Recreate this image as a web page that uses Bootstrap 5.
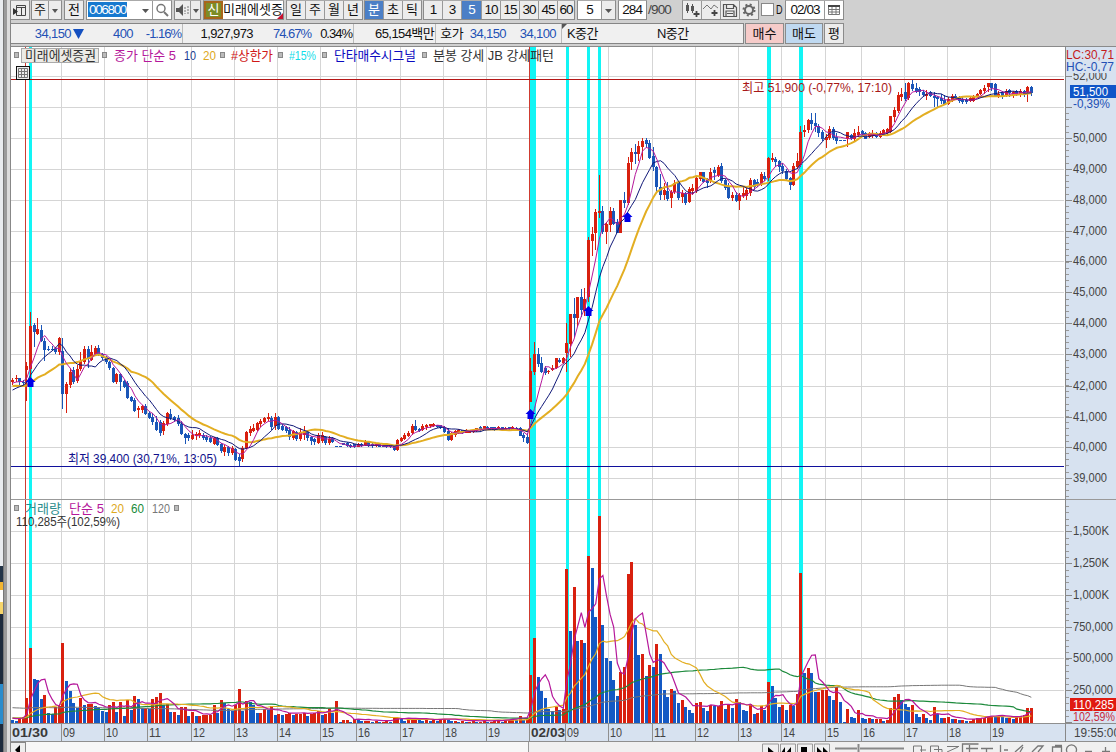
<!DOCTYPE html>
<html lang="ko">
<head>
<meta charset="utf-8">
<title>미래에셋증권 5분봉</title>
<link rel="stylesheet" href="https://cdn.jsdelivr.net/npm/bootstrap@5.3.0/dist/css/bootstrap.min.css">
<style>
body{width:1116px;height:752px;overflow:hidden;background:#d0d0d0;color:#111;font:13px/18px "Liberation Sans","Noto Sans CJK KR",sans-serif}
.edge{width:11px;flex:none;background:linear-gradient(90deg,#e9ecef 0 3px,#777 3px 4px,#9b9b9b 4px 7px,#dcdcdc 7px 10px,#888 10px)}
.edge i{display:block;width:3px}
main{width:1105px}
.bar1{height:22px;padding-bottom:2px;margin-left:-1px;gap:2px}
.grp{height:20px;flex:none;background:#ececec;border:1px solid #8b8b8b;border-top-color:#aaa}
.grp.tight{margin-left:-1px}
.cel{flex:none;width:19px;text-align:center;border-left:1px solid #999;font-size:13px;line-height:18px;height:18px;white-space:nowrap;overflow:hidden}
.cel.num{letter-spacing:-.95px;font-size:13.5px}
.cel:first-child{border-left:0;width:18px}
.cel.fill{background:#4b7fc6;color:#fff}
.cel.w13{width:13px}.cel.w14{width:14px}.cel.w10{width:10px}.cel.w17{width:17px}.cel.w20{width:20px}.cel.w38{width:38px}
.cel.w15:first-child{width:15px}.cel.w16:first-child{width:16px}.cel.w23:first-child{width:23px}.cel.w27:first-child{width:27px}.cel.w38:first-child{width:38px}
.cel.code:first-child{width:51px;text-align:left}
.code span{background:#1779cf;color:#fff;letter-spacing:-1.35px;font-size:13.5px;padding:0 1px;margin-left:1px;display:inline-block;height:15px;line-height:15px}
.cel.sin:first-child{background:#7c8c26;color:#fff;outline:2px solid #a7661c;outline-offset:-2px;width:19px}
.cel.nm{width:60px;border-left:0}
.total{width:32px;font-size:13.5px;letter-spacing:-.8px;line-height:20px;color:#444;margin-left:-1px;flex:none}
.chk{width:13px;height:13px;border:1px solid #888;margin-top:3px;flex:none}
.dchar{width:7px;line-height:19px;flex:none;transform:scaleX(.7);transform-origin:0 0}
.wht{background:#fff}
.bar2{height:24px;padding-top:1px;margin-left:-1px;gap:1px}
.quote{width:734px;height:21px;background:#f0f0f0;border:1px solid #858585;font-size:13px;line-height:19px;letter-spacing:-.6px;flex:none}
.quote span{flex:none;text-align:right;white-space:pre}
.quote .dv{border-right:1px solid #bbb;padding-right:1px}
.quote .pct{letter-spacing:-1px}
.bl{color:#2350b5}
.act{height:21px;border:1px solid #8b8b8b;text-align:center;line-height:19px;flex:none}
svg{display:block}
.plot text{font-size:13px;white-space:pre}
.foot{height:10px;background:#f0f0f0;overflow:hidden}
.foot .track{width:503px;background:#f7f7f7;flex:none;border-right:1px solid #999}
.foot .knob{width:15px;border:1px solid #888;border-width:1px 1px 0 0;background:#eee;flex:none}
</style>
</head>
<body>
<div class="d-flex h-100">
  <div class="edge">
    <i style="height:566px"></i>
    <i style="height:16px;background:#233447"></i>
    <i style="height:8px;background:#f2b530"></i>
    <i style="height:12px;background:#fff"></i>
    <i style="height:12px;background:#f6d56a"></i>
    <i style="height:70px;background:#1d2b3d"></i>
    <i style="height:40px;background:#2a8ccc"></i>
    <i style="height:28px;background:#1d2b3d"></i>
  </div>
  <main class="d-flex flex-column">
    <div class="bar1 d-flex">
      <div class="grp d-flex"><div class="cel"><svg width="18" height="18"><path d="M5.500 4.500h9v10h-9zM5.500 6.500h9M10.500 6.500v8" fill="none" stroke="#444"/><path d="M2 7l5 3.500-5 3.500z" fill="#333"/></svg></div></div>
      <div class="grp tight d-flex"><div class="cel w16">주</div><div class="cel w13"><svg width="12" height="18"><path d="M3 8h6l-3 4z" fill="#555"/></svg></div></div>
      <div class="grp d-flex"><div class="cel">전</div></div>
      <div class="grp d-flex wht"><div class="cel code"><span>006800</span></div><div class="cel w14 border-0"><svg width="13" height="18"><path d="M4 8h7l-3.500 4z" fill="#555"/></svg></div><div class="cel"><svg width="18" height="18"><circle cx="8" cy="7.500" r="4" fill="none" stroke="#777" stroke-width="1.500"/><path d="M11 11l4 4" stroke="#777" stroke-width="2"/></svg></div></div>
      <div class="grp d-flex"><div class="cel w15"><svg width="15" height="18"><path d="M1 7h3l4-4v12l-4-4h-3z" fill="#555"/><path d="M10 6v7M13 5v9" stroke="#777" stroke-dasharray="2 1"/></svg></div><div class="cel w10"><svg width="10" height="18"><path d="M2 8h6l-3 4z" fill="#555"/></svg></div></div>
      <div class="grp d-flex wht position-relative"><div class="cel sin">신</div><div class="cel nm">미래에셋증</div><svg class="position-absolute end-0 bottom-0" width="6" height="6"><path d="M6 0v6H0z" fill="#c8102e"/></svg></div>
      <div class="grp d-flex"><div class="cel">일</div><div class="cel">주</div><div class="cel">월</div><div class="cel">년</div></div>
      <div class="grp tight d-flex"><div class="cel fill">분</div><div class="cel">초</div><div class="cel">틱</div></div>
      <div class="grp tight d-flex"><div class="cel num">1</div><div class="cel num">3</div><div class="cel num fill w20">5</div><div class="cel num">10</div><div class="cel num">15</div><div class="cel num">30</div><div class="cel num">45</div><div class="cel num w17">60</div></div>
      <div class="grp d-flex wht"><div class="cel num w23">5</div><div class="cel w14" style="background:#ececec"><svg width="13" height="18"><path d="M3 8h7l-3.500 4z" fill="#555"/></svg></div></div>
      <div class="grp d-flex wht"><div class="cel num w27 text-end pe-1">284</div></div>
      <div class="total">/900</div>
      <div class="grp d-flex">
        <div class="cel"><svg width="18" height="18"><path d="M4.500 2v10M9.500 3v9" stroke="#555"/><path d="M3 4h3v6h-3zM8 5h3v5h-3z" fill="#555"/><path d="M13.500 10v6M10.500 13h6" stroke="#444" stroke-width="1.800"/></svg></div>
        <div class="cel"><svg width="18" height="18"><path d="M1 8l4-4 4 4 3-4 4 3" fill="none" stroke="#777"/><path d="M12.500 9v6M9.500 12h6" stroke="#444" stroke-width="1.800"/></svg></div>
        <div class="cel"><svg width="18" height="18"><path d="M2.500 3.500h10l3 3v9h-13zM5.500 3.500v4h7v-4M5 15v-5h8v5M6 12.500h6" fill="none" stroke="#555" stroke-width="1.200"/></svg></div>
        <div class="cel"><svg width="18" height="18"><circle cx="9" cy="9" r="4" fill="none" stroke="#666" stroke-width="2"/><circle cx="9" cy="9" r="5.500" fill="none" stroke="#666" stroke-width="2" stroke-dasharray="2 2.320"/></svg></div>
      </div>
      <div class="wht chk"></div>
      <div class="dchar">D</div>
      <div class="grp d-flex wht"><div class="cel num w38">02/03</div><div class="cel"><svg width="17" height="18"><path d="M3.500 4.500h11v9h-11zM3.500 8.500h11M3.500 11h11M7 5v8M11 5v8" fill="none" stroke="#777"/><path d="M3 4h12v2H3z" fill="#444"/></svg></div></div>
    </div>
    <div class="bar2 d-flex">
      <div class="quote d-flex">
        <span class="bl d-flex justify-content-end align-items-center" style="width:73px">34,150<svg width="13" height="12"><path d="M2 1h11L7.500 11z" fill="#1450c0"/></svg></span>
        <span class="bl" style="width:49px">400</span><span class="bl dv pct" style="width:50px">-1.16%</span>
        <span style="width:70px">1,927,973</span><span class="bl pct" style="width:58px">74.67%</span><span class="dv pct" style="width:43px">0.34%</span>
        <span class="dv" style="width:82px">65,154백만</span>
        <span style="width:27px">호가</span><span class="bl" style="width:43px">34,150</span><span class="bl" style="width:50px">34,100</span><span class="dv" style="width:6px"></span>
        <span class="text-start position-relative" style="width:95px;padding-left:5px">K중간<svg class="position-absolute start-0 top-0" width="5" height="5"><path d="M0 0h5L0 5z" fill="#555"/></svg></span><span class="text-start">N중간</span>
      </div>
      <div class="act" style="width:39px;background:#f6cbc9">매수</div>
      <div class="act" style="width:38px;background:#bfd9f1">매도</div>
      <div class="act" style="width:20px;background:#ececec">평</div>
    </div>
    <svg class="plot" id="chart" width="1105" height="696" viewBox="11 46 1105 696"></svg>
    <div class="foot d-flex">
      <div class="knob"><svg width="14" height="10"><path d="M9 2v10L4 7z" fill="#000"/></svg></div>
      <div class="track"></div>
      <div class="flex-fill"><svg width="587" height="10" viewBox="529 742 587 10" fill="none" stroke="#777">
        <path d="M762.500 752v-8h16v8M780.500 752v-8h15v8M797.500 752v-8h15v8M814.500 752v-8h15v8" stroke="#999"/>
        <path d="M768 747l7 6h-7zM791 747v6h-5zM785 747v6h-4zM801 747h6v6h-6zM817 747l5 5h-5zM823 747l5 5h-5z" fill="#000" stroke="none"/>
        <path d="M835 748.500h22M860 748.500h44M858.500 744v8" stroke="#888" stroke-width="2"/>
        <path d="M913.500 752v-6h8v6M920 750h6M930.500 752v-6h8v6M934 749.500h8v4M947 746.500h12M947 752l11-5" />
        <path d="M962.500 752v-8h16M969.500 745v8M966 748.500h12M981 748.500h12M986.500 748v5M1000.500 745v8M1004 750h4M1015 752l8-7M1020 752l3-5M1032 752l6-6h5l-5 6M1052.500 752v-5h9v5M1055 745.500h7M1067 752a5 5 0 1 1 9 0M1085 751.500h7M1102 751.500h8M1105.500 747v5" stroke-width="1.300"/>
      </svg></div>
    </div>
  </main>
</div>
<script src="https://cdn.jsdelivr.net/npm/bootstrap@5.3.0/dist/js/bootstrap.bundle.min.js"></script>
<script>
const UP='#d8200f', DN='#1a56b8', STEP=3.6, X0=12.5;
// one candle per entry: direction, body top, body bottom, high, low
const candles=`r380,382,378,385 r378,379,375,382 b378,382,378,385 b382,383,380,385 r366,370,362,401 r326,369,312,381 b325,332,323,347 r329,334,318,335 b330,341,325,342 b341,350,338,361
b349,350,346,351 b349,350,346,351 b349,352,347,354 r338,352,337,355 b351,394,338,409 r384,394,382,413 r372,385,368,388 b370,382,367,384 r369,381,365,383 r361,369,352,371
r349,362,346,364 b349,359,346,368 r352,360,345,361 r348,354,346,355 b348,354,345,356 b354,358,353,360 b357,362,356,364 b362,368,361,370 b368,382,367,383 r374,382,373,384
b374,382,373,391 b381,387,380,388 b383,398,381,399 b397,401,396,402 b400,411,398,412 r408,410,406,418 r406,410,405,413 b406,414,404,415 b413,418,411,419 b417,422,413,425
b422,430,416,431 b422,433,420,436 r423,431,421,435 r413,424,412,426 b414,418,409,420 b417,420,416,422 b418,424,415,426 b424,434,421,435 b434,438,433,444 b435,438,433,441
r435,439,430,440 r434,436,432,440 r433,435,430,438 b435,438,433,440 b437,440,435,442 b438,442,436,443 r438,444,437,445 b438,445,437,446 b444,451,443,453 r447,452,445,456
b447,453,446,456 r448,453,446,455 b449,460,448,461 b457,461,454,466 r448,459,446,462 r432,448,431,449 r429,433,426,436 r428,431,424,432 r423,430,422,431 r421,424,419,427
r418,422,417,423 r417,419,413,421 b418,427,416,430 r417,426,413,430 b417,429,416,430 b426,430,424,431 b427,431,426,433 b430,437,427,440 r431,438,430,440 b432,439,431,441
r432,439,428,441 r431,435,426,440 b432,438,431,441 b437,441,436,445 b439,442,438,445 r435,443,433,444 r435,441,432,443 b437,443,436,445 r439,443,436,445 b438,442,437,443
b446,447,446,447 b446,447,446,447 b443,445,443,445 b443,446,442,447 b445,447,444,448 b444,447,444,448 r444,447,443,447 b444,446,443,447 r442,445,440,446 b442,446,441,447
b444,446,443,448 r444,446,443,447 b444,447,444,447 b445,447,444,447 b445,447,445,448 b445,447,445,448 b446,450,445,451 r440,450,439,451 r438,441,437,442 r435,439,433,440
r433,436,431,437 r426,433,424,435 b426,430,420,431 b429,431,428,432 r426,430,424,431 r425,427,424,430 r424,426,424,428 r424,426,423,427 b425,427,425,428 b425,428,425,429
b427,432,426,433 b431,440,428,441 r433,440,432,441 r431,435,430,437 r430,433,429,434 b430,433,430,434 r430,433,429,433 r431,433,430,433 r430,432,430,433 r428,431,428,432
b427,430,426,432 r426,429,426,430 b427,429,426,430 b427,429,427,430 b427,430,427,431 r427,429,426,430 b427,430,427,431 r428,430,427,430 b427,429,427,431 r427,430,426,430
b428,430,427,431 b428,436,427,436 b435,438,433,442 b437,443,433,444 r371,402,358,402 r354,372,342,375 b354,364,348,367 b363,372,357,373 b368,373,366,375 r371,372,370,374
r368,370,365,371 r358,368,358,369 b360,362,358,363 r358,363,357,364 r343,353,323,372 r314,344,314,357 b314,318,298,338 r297,318,297,327 b297,310,289,317 r299,311,288,316
r240,297,237,302 r234,241,227,256 r212,233,209,250 r211,213,175,218 b211,232,206,234 r224,232,222,244 r211,225,207,232 b211,224,208,225 b222,233,219,233 r200,233,200,233
b200,203,192,208 r163,203,157,205 r152,162,148,170 b152,154,144,164 r146,154,141,161 r141,147,138,160 b140,144,138,148 b143,158,140,159 b156,167,147,171 b167,187,166,191
b187,195,174,200 r190,195,183,200 b191,199,182,201 r192,198,190,208 r183,192,180,194 b183,198,181,200 r193,197,190,203 b193,203,192,205 r189,202,187,203 r188,191,184,195
r178,191,176,193 r172,179,172,181 b172,182,172,183 b180,183,178,188 r172,181,168,183 b170,173,167,180 r167,175,165,177 b166,181,163,183 b180,188,179,190 b187,198,183,199
r195,198,192,201 b195,201,192,202 r195,201,193,210 r193,196,187,198 r190,196,188,200 r180,193,178,196 b180,187,179,190 b182,184,179,187 r174,184,172,186 b176,179,172,181
r158,178,157,181 r158,160,153,162 b159,162,157,167 b161,167,160,172 b166,171,163,174 b171,179,169,181 b178,185,177,190 r166,185,163,186 r161,167,153,169 r132,165,126,167
r130,132,125,137 r120,130,119,133 b120,124,113,130 b123,126,113,132 b126,133,124,137 b132,139,130,141 r137,140,134,148 r129,138,126,140 b129,138,127,140 b137,141,133,144
b140,141,140,141 b140,141,140,141 r132,139,132,147 b135,139,134,140 r133,139,129,141 r132,135,126,137 b131,134,130,135 b133,139,132,139 r133,137,132,138 r133,136,130,138
b133,137,132,138 r133,137,131,138 r130,134,129,136 r129,133,128,135 r116,132,116,133 r110,117,107,122 r95,111,92,113 r94,97,88,101 b92,99,83,101 r83,98,82,100
b84,89,80,91 b88,92,83,93 b89,92,87,96 b92,95,90,97 r94,96,90,100 b92,96,91,97 b96,98,92,107 b97,99,96,107 b98,101,94,104 b100,104,95,105
r99,104,97,105 r96,100,94,102 b96,98,94,99 b97,101,96,103 b99,102,97,104 b100,102,98,104 r98,101,97,102 r96,101,95,102 r94,97,93,98 r90,94,89,95
r88,91,85,94 r83,87,83,92 b83,88,83,91 b84,96,83,97 r94,97,91,98 b92,97,91,99 r91,95,89,97 b90,93,89,97 r92,95,91,98 b91,95,90,96
r91,95,89,97 b91,94,90,97 r87,92,86,102 b87,93,86,96`.split(/\s+/).map(s=>{
  const [t,b,h,l]=s.slice(1).split(',').map(Number);return {up:s[0]==='r',t,b,h,l};});
// volume bar heights
const vol=`3 2 5 6 25 75 44 43 24 28 10 9 16 17 80 42 32 20 15 25 18 19 19 17 16 12 11 18 21 11 21 7 23 13 27 24 15 15 14 24
26 30 18 19 11 11 8 16 16 7 11 7 7 8 8 8 18 10 23 20 14 12 18 34 12 22 21 18 10 10 14 13 17 8 9 8 9 10 8 9
9 10 7 9 10 12 8 9 15 10 22 1 3 3 1 4 3 2 2 2 1 2 1 1 2 1 5 5 4 2 3 4 5 3 2 3 2 3 2 3
4 3 2 2 1 2 1 1 2 1 1 2 1 1 2 2 1 3 3 4 3 7 3 5 48 85 46 32 25 14 12 16 13 14 154 92 136 82 83 80
167 155 106 207 98 65 62 43 27 51 56 149 161 98 68 69 47 58 56 79 69 33 26 34 32 20 23 16 13 10 20 21 15 12 18 17 17 22 14 18
15 24 21 13 12 19 9 10 17 13 41 37 25 16 18 13 18 17 29 150 50 55 50 31 31 33 33 27 23 36 21 1 14 6 5 13 5 4 5 4
4 4 2 3 15 26 29 23 19 16 18 9 6 9 5 3 16 9 5 5 6 4 4 3 3 2 2 4 5 5 5 7 7 6 7 6 5 5 4 7
7 8 15 15`.split(/\s+/).map(Number);

const out=[], X=i=>X0+STEP*i;
const rect=(x,y,w,h,f)=>out.push(`<rect x="${x}" y="${y}" width="${w}" height="${h}" fill="${f}" shape-rendering="crispEdges"/>`);
const text=(x,y,s,w,c,extra='')=>out.push(`<text x="${x}" y="${y}" fill="${c}" textLength="${w}" lengthAdjust="spacingAndGlyphs" ${extra}>${s}</text>`);
const hours=[[61,'09'],[104,'10'],[147,'11'],[191,'12'],[234,'13'],[277,'14'],[320,'15'],[356,'16'],[400,'17'],[443,'18'],[486,'19'],[565,'09'],[608,'10'],[652,'11'],[695,'12'],[738,'13'],[781,'14'],[825,'15'],[861,'16'],[904,'17'],[947,'18'],[990,'19']];

rect(11,46,1105,696,'#fff');
rect(1065,46,51,696,'#d7e2f0'); rect(11,724,1105,18,'#d7e2f0');
for(const [x] of hours) if(x!==565) rect(x,47,1,676,'#d5d5d5');
const pys=[76,107,138,169,200,231,261,292,323,354,386,417,447,478], vys=[531,563,595,627,658,690];
for(const y of [...pys,...vys]) rect(11,y,1053,1,'#d5d5d5');
for(const [x,w] of [[29,3],[530,6],[566,3],[587,3],[598,3],[767,4],[799,4]]) rect(x,47,w,676,'#12f5f5');
rect(25,47,1,676,'#cf3b30'); rect(529,47,1,676,'#cf3b30');
rect(11,79,1053,1,'#b51616'); rect(11,466,1053,1,'#10109c');

candles.forEach((c,i)=>{const x=Math.round(X(i)-.5),f=c.up?UP:DN;
  rect(x,c.h,1,c.l-c.h,f); rect(x-1,c.t,3,Math.max(1,c.b-c.t),f);});
vol.forEach((v,i)=>{const x=Math.round(X(i)-.5);
  rect(x-1,723-v,3,v,v>=(vol[i-1]||9)?UP:'#1459c4');});

function average(src,hist,n,map){const all=[...hist,...src],k=hist.length;
  return src.map((_,i)=>{let s=0;for(let j=0;j<n;j++)s+=all[k+i-j];return X(i).toFixed(1)+','+map(s/n).toFixed(1)}).join(' ');}
const curve=(pts,c,w)=>out.push(`<polyline points="${pts}" fill="none" stroke="${c}" stroke-width="${w}"/>`);
const close=candles.map(c=>c.up?c.t:c.b);
const ph=[...Array(10).fill(380),...Array(6).fill(397),...Array(4).fill(384)], id=v=>v;
curve(average(close,ph,20,id),'#e3ae22',2);
curve(average(close,ph,10,id),'#101878',1);
curve(average(close,ph,5,id),'#b5189b',1);
const vh=[...Array(60).fill(25),...Array(60).fill(4)], vy=v=>722-v;
curve(average(vol,vh,120,vy),'#777',1);
curve(average(vol,vh,60,vy),'#1d8a3c',1.2);
curve(average(vol,vh,20,vy),'#e3ae22',1.2);
curve(average(vol,vh,5,vy),'#b5189b',1.2);

for(const [x,y] of [[30,382],[530,414],[588,311],[627,217]])
  out.push(`<path d="M${x+.5} ${y-5}l5 5h-2v5h-6v-5h-2z" fill="#0000e8"/>`);

// frames and scales
rect(11,46,1105,1,'#8a8a8a'); rect(11,499,1105,1,'#999'); rect(11,723,1105,1,'#8f8f8f'); rect(11,741,1105,1,'#8f8f8f'); rect(1065,46,1,696,'#888');
for(let y=107+6.2;y<498;y+=6.18) rect(1066,Math.round(y),3,1,'#999');
for(let y=506;y<722;y+=6.36) rect(1066,Math.round(y),3,1,'#999');
['52,000','','50,000','49,000','48,000','47,000','46,000','45,000','44,000','43,000','42,000','41,000','40,000','39,000'].forEach((s,k)=>{
  rect(1066,pys[k],6,1,'#888'); if(s) text(1073,pys[k]+4,s,34,'#444');});
['1,500K','1,250K','1,000K','750,000','500,000','250,000'].forEach((s,k)=>{rect(1066,vys[k],6,1,'#888');text(1073,vys[k]+4,s,k<3?36:40,'#444');});
rect(1066,722,6,1,'#888');
rect(1066,48,50,25,'#d7e2f0');
const sm='style="font-size:12px"';
text(1066,59,'LC:30,71',48,'#c41c1c',sm); text(1066,71,'HC:-0,77',48,'#2350b5',sm);
rect(1070,85,46,13,'#0f55c8'); text(1073,96,'51,500',35,'#fff',sm); text(1073,108,'-0,39%',37,'#2350b5',sm);
rect(1070,698,46,13,'#e01a10'); text(1073,709,'110,285',41,'#fff',sm); text(1073,721,'102,59%',42,'#c8283c',sm);

for(const [x,h] of hours){rect(x,724,1,17,'#8f8f8f'); text(x+2,737,h,12,'#444');}
rect(529,724,1,17,'#8f8f8f');
text(12,737,'01/30',36,'#3a3a3a','font-weight="bold"'); text(531,737,'02/03',34,'#3a3a3a','font-weight="bold"');
text(1074,737,'19:55:00',46,'#444',sm);

// legends
const box=(x,y)=>out.push(`<rect x="${x}.5" y="${y}.5" width="4" height="5" fill="#bbb" stroke="#888"/>`);
out.push('<rect x="21.500" y="48.500" width="77" height="14" fill="#ecebe6" stroke="#aaa"/>');
for(const x of [14,102,220,278,322,422]) box(x,52);
text(25,60,'미래에셋증권',71,'#333'); text(114,60,'종가 단순 5',62,'#b5189b'); text(184,60,'10',12,'#1c3c94'); text(203,60,'20',13,'#dda820');
text(231,60,'#상한가',42,'#d01818'); text(289,60,'#15%',27,'#10dce8'); text(334,60,'단타매수시그널',82,'#0a0ac0'); text(433,60,'분봉 강세 JB 강세패턴',121,'#333');
out.push('<rect x="16.500" y="66.500" width="13" height="13" fill="#eee" stroke="#111"/><path d="M18.500 68.500h9v9h-9zM18.500 71.500h9M18.500 74.500h9M21.500 68.500v9M24.500 68.500v9" fill="none" stroke="#777"/>');
text(742,92,'최고 51,900 (-0,77%, 17:10)',150,'#a81818');
text(68,463,'최저 39,400 (30,71%, 13:05)',149,'#10108c');
box(14,505); box(174,505);
text(25,513,'거래량',36,'#2b8c8c'); text(69,513,'단순 5',35,'#b5189b'); text(111,513,'20',13,'#dda820'); text(131,513,'60',13,'#178a38'); text(152,513,'120',18,'#777');
text(16,526,'110,285주(102,59%)',104,'#333');
document.getElementById('chart').innerHTML=out.join('');
</script>
</body>
</html>
